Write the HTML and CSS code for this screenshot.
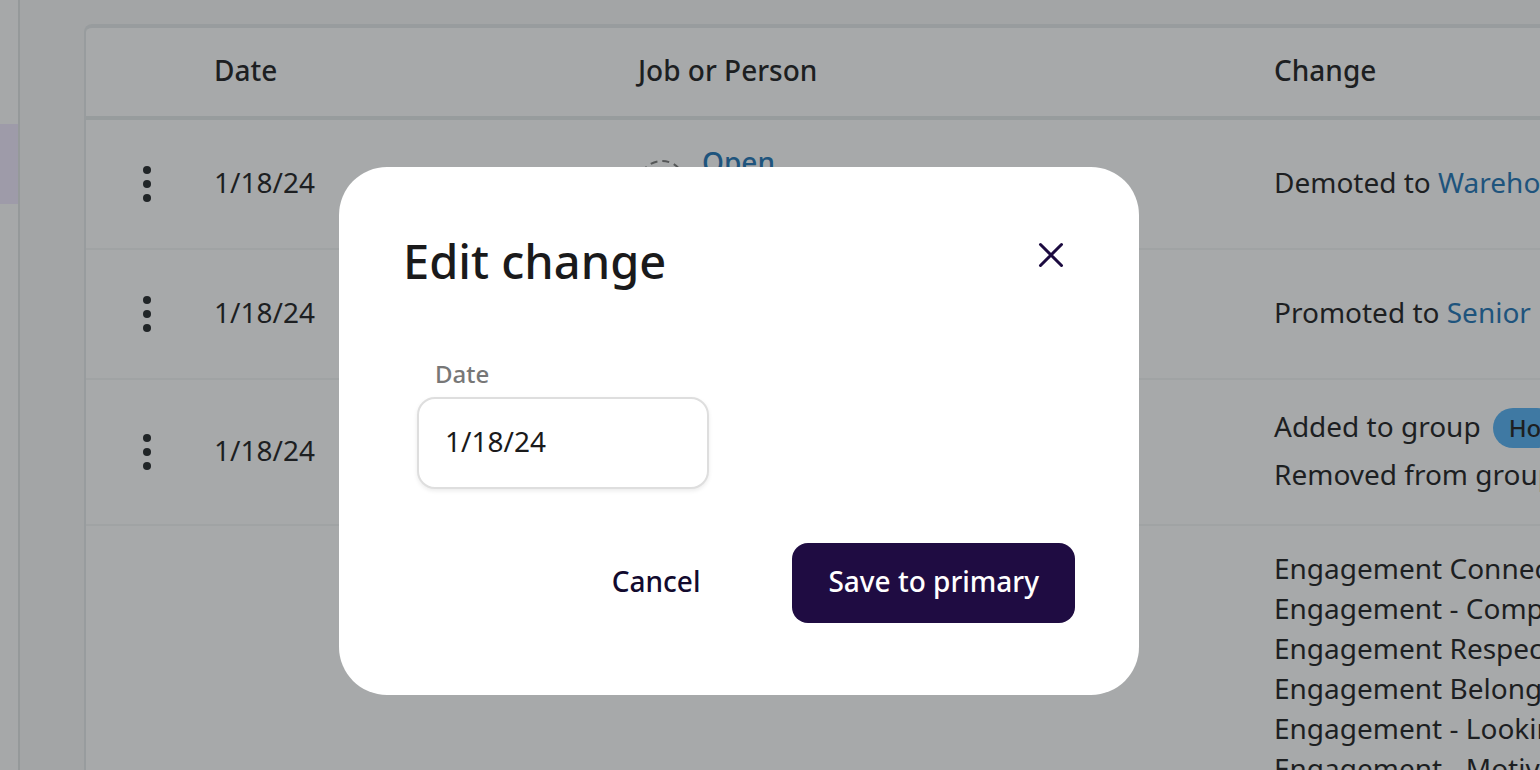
FILE: index.html
```html
<!DOCTYPE html>
<html lang="en">
<head>
<meta charset="utf-8">
<meta name="viewport" content="width=device-width, initial-scale=1">
<title>Edit change</title>
<link rel="stylesheet" href="styles.css">
</head>
<body>
<div class="app">
  <nav class="sidebar" aria-label="Main"><div class="sidebar-active"></div></nav>
  <main class="content">
    <div class="card">
      <table class="changes">
        <colgroup><col class="col-menu"><col class="col-date"><col class="col-person"><col class="col-change"></colgroup>
        <thead>
          <tr><th></th><th>Date</th><th>Job or Person</th><th>Change</th></tr>
        </thead>
        <tbody>
          <tr>
            <td><button class="menu" aria-label="Row actions"><svg width="10" height="38" viewBox="0 0 10 38"><circle cx="5" cy="5" r="4"/><circle cx="5" cy="19" r="4"/><circle cx="5" cy="33" r="4"/></svg></button></td>
            <td>1/18/24</td>
            <td><div class="person"><svg class="avatar" width="48" height="48" viewBox="0 0 48 48"><circle cx="24" cy="24" r="23"/></svg><div class="person-text"><a href="#" class="person-name">Open</a></div></div></td>
            <td>Demoted to <a href="#">Warehou</a></td>
          </tr>
          <tr>
            <td><button class="menu" aria-label="Row actions"><svg width="10" height="38" viewBox="0 0 10 38"><circle cx="5" cy="5" r="4"/><circle cx="5" cy="19" r="4"/><circle cx="5" cy="33" r="4"/></svg></button></td>
            <td>1/18/24</td>
            <td><div class="person"><div class="person-text"></div></div></td>
            <td>Promoted to <a href="#">Senior D</a></td>
          </tr>
          <tr>
            <td><button class="menu" aria-label="Row actions"><svg width="10" height="38" viewBox="0 0 10 38"><circle cx="5" cy="5" r="4"/><circle cx="5" cy="19" r="4"/><circle cx="5" cy="33" r="4"/></svg></button></td>
            <td>1/18/24</td>
            <td></td>
            <td><div class="group-line">Added to group <span class="pill">Ho</span></div><div class="group-line">Removed from group</div></td>
          </tr>
          <tr>
            <td></td><td></td><td></td>
            <td>Engagement Connec<br>Engagement - Comp<br>Engagement Respec<br>Engagement Belong<br>Engagement - Lookin<br>Engagement - Motiva</td>
          </tr>
        </tbody>
      </table>
    </div>
  </main>
</div>
<div class="overlay">
  <form class="modal" role="dialog" aria-modal="true" aria-labelledby="modal-title">
    <header class="modal-head">
      <h1 id="modal-title">Edit change</h1>
      <button type="button" class="close" aria-label="Close"><svg width="26" height="26" viewBox="0 0 26 26"><path d="M2.500 2.500L23.500 23.500M23.500 2.500L2.500 23.500"/></svg></button>
    </header>
    <div class="field">
      <label for="date">Date</label>
      <input id="date" type="text" value="1/18/24">
    </div>
    <footer class="actions">
      <button type="button" class="btn">Cancel</button>
      <button type="submit" class="btn btn-primary">Save to primary</button>
    </footer>
  </form>
</div>
</body>
</html>
```
FILE: styles.css
```css
* { box-sizing: border-box; }
html, body { height: 100%; }
body {
  margin: 0;
  overflow: hidden;
  font: 28px/40px "Noto Sans", "Open Sans", sans-serif;
  color: #1a1a1b;
  background: #f9f9f9;
}
button, input { font: inherit; color: inherit; }
button { padding: 0; border: 0; background: none; cursor: pointer; }
a { color: #1c72b4; text-decoration: none; }
svg { display: block; }

.app { display: flex; height: 100%; overflow: hidden; }
.sidebar { flex: none; width: 20px; padding-top: 124px; border-right: 2px solid #e2e4e5; background: #fefefe; }
.sidebar-active { height: 80px; background: #f0e8fe; }
.content { flex: 1; min-width: 0; padding: 24px 0 0 64px; }
.card {
  overflow: hidden;
  border: 2px solid #e6eaeb;
  border-width: 4px 0 0 2px;
  border-radius: 8px 0 0 0;
  background: #fff;
}

.changes { width: 100%; min-width: 1740px; table-layout: fixed; border-spacing: 0; }
.col-menu { width: 128px; }
.col-date { width: 424px; }
.col-person { width: 636px; }
.changes th { padding: 22px 0 26px; border-bottom: 4px solid #e4e9ea; text-align: left; font-weight: 500; }
.changes td { padding: 22px 0 26px; border-bottom: 2px solid #f4f5f5; white-space: nowrap; }
.changes td:first-child { padding: 24px 0; }
.menu { display: grid; place-items: center; width: 40px; height: 40px; margin-left: 41px; fill: #1f2325; }
.person { display: flex; align-items: center; gap: 16px; }
.person-text { min-height: 80px; }
.person-name { font-weight: 500; }
.avatar { margin-top: 4px; fill: none; stroke: #777; stroke-width: 2; stroke-dasharray: 7 5; }
.group-line { display: flex; align-items: center; gap: 12px; height: 48px; }
.pill { margin-top: 4px; padding: 0 16px; border-radius: 20px; background: #52b0f4; font-size: 24px; font-weight: 500; }

.overlay {
  position: fixed;
  inset: 0;
  display: flex;
  align-items: center;
  justify-content: center;
  padding: 92px 62px 0 0;
  background: rgba(35, 40, 43, .4);
}
.modal { width: 800px; padding: 64px 64px 72px; border-radius: 48px; background: #fff; }
.modal-head { display: flex; align-items: flex-start; justify-content: space-between; }
h1 { margin: 0; font-size: 47px; line-height: 60px; font-weight: 500; }
.close { display: grid; place-items: center; width: 48px; height: 48px; }
.close svg { fill: none; stroke: #1c0b40; stroke-width: 3; stroke-linecap: round; }
.field { display: flex; flex-direction: column; margin: 66px 0 54px 14px; }
.field label { padding-left: 18px; margin-bottom: 6px; font-size: 24px; line-height: 34px; font-weight: 500; color: #777; }
.field input {
  width: 292px;
  height: 92px;
  padding: 0 26px 4px;
  border: 2px solid #dedede;
  border-radius: 18px;
  background: #fff;
  box-shadow: 0 2px 4px rgba(0, 0, 0, .08);
  outline: none;
}
.actions { display: flex; justify-content: flex-end; gap: 56px; }
.btn { height: 80px; padding: 0 36px 4px; border-radius: 16px; font-weight: 500; color: #120a2e; }
.btn-primary { background: #1f0c42; color: #fff; }
```
